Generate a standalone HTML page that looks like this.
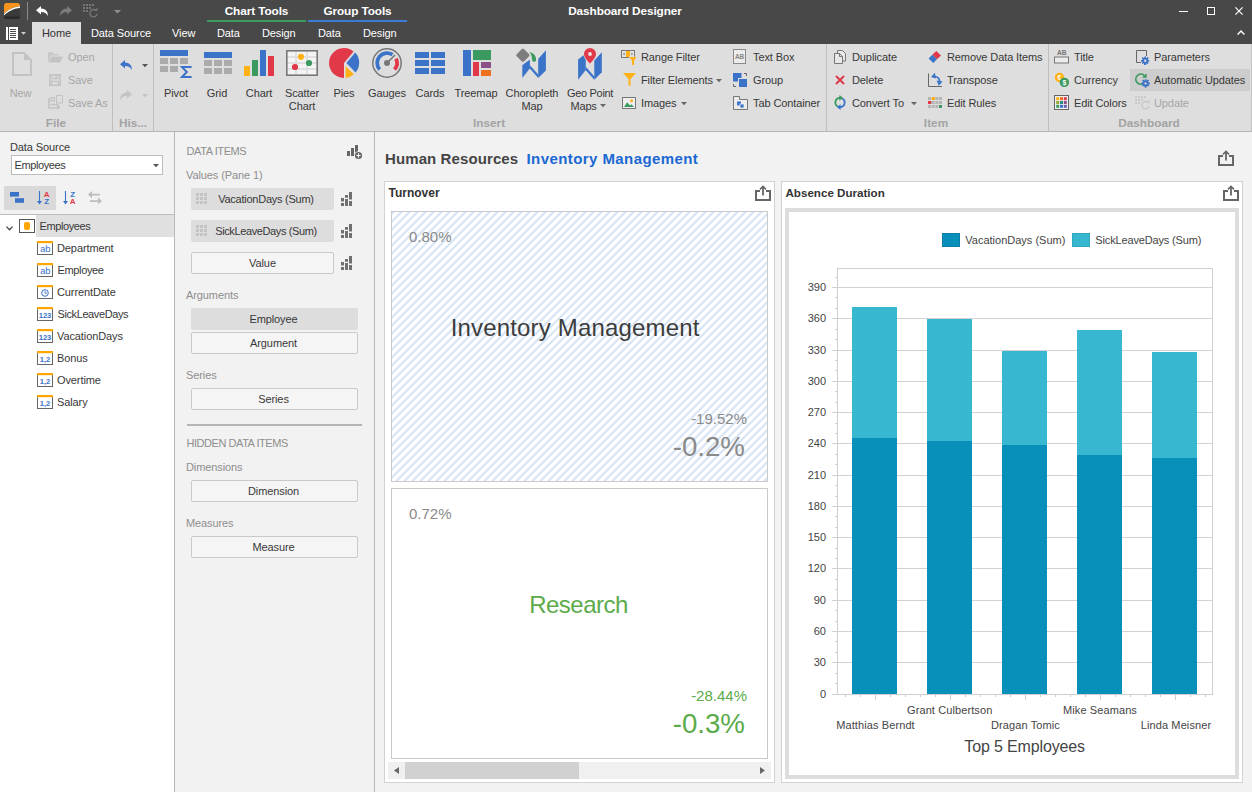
<!DOCTYPE html>
<html><head><meta charset="utf-8"><title>Dashboard Designer</title>
<style>
*{box-sizing:border-box;margin:0;padding:0}
html,body{width:1252px;height:792px;overflow:hidden;background:#f2f2f2}
body{position:relative;font:11px "Liberation Sans",sans-serif;color:#383838;letter-spacing:-0.1px}
.a{position:absolute}
.t{position:absolute;white-space:nowrap;line-height:14px;height:14px}
.c{text-align:center}
svg{position:absolute;overflow:visible}
#hdr{left:0;top:0;width:1252px;height:44px;background:#484848}
#rib{left:0;top:44px;width:1252px;height:88px;background:#dedede;border-bottom:1px solid #b6b6b6}
.w{color:#fff}
.b{font-weight:bold}
.dis{color:#a6a6a6}
.gc{color:#a3a3a3;font-weight:bold;font-size:11.8px;letter-spacing:0}
.sep{position:absolute;top:44px;width:1px;height:87px;background:#bebebe}
.btnf{position:absolute;height:22px;background:#dddddd;border-radius:2px;text-align:center;line-height:21px;color:#333}
.btno{position:absolute;height:22px;background:#f5f5f5;border:1px solid #c9c9c9;border-radius:2px;text-align:center;line-height:20px;color:#333}
.lbl{color:#8e8e8e}
</style></head><body>
<div class="a" id="hdr"></div>
<div class="a" id="rib"></div><div class="a" style="left:1251px;top:44px;width:1px;height:87px;background:#c4c4c4"></div>
<!--HEADER-->
<!-- logo -->
<svg class="a" style="left:4px;top:3px" width="16" height="16" viewBox="0 0 16 16">
<defs><clipPath id="lg"><rect x="0" y="0" width="16" height="16" rx="2.5"/></clipPath></defs>
<g clip-path="url(#lg)"><rect width="16" height="16" fill="#3a3a3a"/>
<path d="M0 0H16V3.2C9 4 3.5 7 0 11Z" fill="#f7941e"/>
<path d="M0 11C3.5 7 9 4 16 3.2V5C9.5 5.6 4 8.5 0 12.6Z" fill="#fff"/>
<rect x="0" y="13.5" width="16" height="2.5" fill="#2a2a2a"/></g>
</svg>
<div class="a" style="left:27px;top:2px;width:1px;height:18px;background:#8c8c8c"></div>
<!-- undo white -->
<svg style="left:36px;top:6px" width="12" height="10" viewBox="0 0 12 10"><path d="M0 4.2L5 0V2.6C9.5 2.6 11.8 5.5 12 10C10.4 7.2 8.5 6 5 6V8.5Z" fill="#fff"/></svg>
<!-- redo grey -->
<svg style="left:60px;top:6px" width="12" height="10" viewBox="0 0 12 10"><path d="M12 4.2L7 0V2.6C2.5 2.6 0.2 5.5 0 10C1.6 7.2 3.5 6 7 6V8.5Z" fill="#7d7d7d"/></svg>
<!-- update grey -->
<svg style="left:83px;top:4px" width="15" height="14" viewBox="0 0 15 14"><g fill="#777">
<rect x="0" y="0" width="2" height="2"/><rect x="3" y="0" width="2" height="2"/><rect x="6" y="0" width="2" height="2"/><rect x="9" y="0" width="2" height="2"/>
<rect x="0" y="3" width="2" height="2"/><rect x="3" y="3" width="2" height="2"/><rect x="6" y="3" width="2" height="2"/>
<rect x="0" y="6" width="2" height="2"/><rect x="3" y="6" width="2" height="2"/></g>
<path d="M13.2 6.6A3.7 3.7 0 1 0 14.2 9.8" fill="none" stroke="#777" stroke-width="1.3"/><path d="M11.2 6.8H14.6V3.4Z" fill="#777"/></svg>
<svg style="left:114px;top:10px" width="7" height="4" viewBox="0 0 7 4"><path d="M0 0H7L3.5 3.5Z" fill="#8f8f8f"/></svg>
<!-- context tabs -->
<div class="t w b" style="left:207px;top:4px;width:99px;text-align:center;font-size:11.8px">Chart Tools</div>
<div class="t w b" style="left:308px;top:4px;width:99px;text-align:center;font-size:11.8px">Group Tools</div>
<div class="a" style="left:207px;top:20px;width:99px;height:2px;background:#3a9d5d"></div>
<div class="a" style="left:308px;top:20px;width:99px;height:2px;background:#3b7bd4"></div>
<div class="t w b" style="left:525px;top:4px;width:200px;text-align:center;font-size:11.8px">Dashboard Designer</div>
<!-- window buttons -->
<div class="a" style="left:1179px;top:11px;width:9px;height:1px;background:#fff"></div>
<div class="a" style="left:1207px;top:7px;width:8px;height:8px;border:1px solid #fff"></div>
<svg style="left:1235px;top:7px" width="8" height="8" viewBox="0 0 8 8"><path d="M0.4 0.4L7.6 7.6M7.6 0.4L0.4 7.6" stroke="#fff" stroke-width="1.2"/></svg>
<svg style="left:1237px;top:30px" width="8" height="5" viewBox="0 0 8 5"><path d="M0.6 4.4L4 1L7.4 4.4" stroke="#fff" stroke-width="1.4" fill="none"/></svg>
<!-- app menu -->
<svg style="left:6px;top:27px" width="12" height="13" viewBox="0 0 12 13"><rect x="0.5" y="0.5" width="11" height="12" fill="#fff" stroke="#fff"/><rect x="0" y="0" width="2.2" height="13" fill="#484848" opacity="0"/><path d="M2.5 0V13" stroke="#484848" stroke-width="1"/><path d="M4 2.5H10M4 4.5H10M4 6.5H10M4 8.5H10M4 10.5H10" stroke="#484848" stroke-width="1"/></svg>
<svg style="left:21px;top:32px" width="5" height="3" viewBox="0 0 5 3"><path d="M0 0H5L2.5 2.7Z" fill="#d0d0d0"/></svg>
<!-- tabs -->
<div class="a" style="left:32px;top:22px;width:49px;height:22px;background:#dedede"></div>
<div class="t" style="left:32px;top:26px;width:49px;text-align:center;color:#333">Home</div>
<div class="t w" style="left:91px;top:26px">Data Source</div>
<div class="t w" style="left:172px;top:26px">View</div>
<div class="t w" style="left:217px;top:26px">Data</div>
<div class="t w" style="left:262px;top:26px">Design</div>
<div class="t w" style="left:318px;top:26px">Data</div>
<div class="t w" style="left:363px;top:26px">Design</div>
<!--/HEADER-->
<!--RIBBON-->
<div class="sep" style="left:112px"></div><div class="sep" style="left:153px"></div><div class="sep" style="left:826px"></div><div class="sep" style="left:1048px"></div>
<!-- File -->
<svg style="left:12px;top:52px" width="20" height="24" viewBox="0 0 20 24"><path d="M1 1H12L19 8V23H1Z" fill="none" stroke="#c3c3c3" stroke-width="2"/><path d="M12 1V8H19Z" fill="#c3c3c3"/></svg>
<div class="t c dis" style="left:0;top:86px;width:41px">New</div>
<svg style="left:48px;top:52px" width="15" height="11" viewBox="0 0 15 11"><path d="M0 10V0H4.5L6 2H11V3.5H3L0.8 10Z" fill="#c8c8c8"/><path d="M3.6 4.5H15L12 10.5H1Z" fill="#c3c3c3"/></svg>
<div class="t dis" style="left:68px;top:50px">Open</div>
<svg style="left:49px;top:74px" width="12" height="12" viewBox="0 0 12 12"><rect x="0.8" y="0.8" width="10.4" height="10.4" fill="none" stroke="#c3c3c3" stroke-width="1.6"/><path d="M3 1V4.6H9V1M2.6 11V7.4H9.4V11" fill="none" stroke="#c3c3c3" stroke-width="1.2"/><rect x="6.2" y="1.6" width="1.6" height="2.2" fill="#c3c3c3"/></svg>
<div class="t dis" style="left:68px;top:73px">Save</div>
<svg style="left:48px;top:95px" width="15" height="14" viewBox="0 0 15 14"><path d="M1 3V13H11V10" fill="none" stroke="#c3c3c3" stroke-width="1.6"/><rect x="3" y="2.6" width="3.4" height="3.4" fill="none" stroke="#c3c3c3" stroke-width="1.2"/><rect x="8.5" y="0.5" width="6" height="7.5" fill="none" stroke="#c3c3c3" stroke-width="1"/><path d="M2.5 9.5H9.5V13" fill="none" stroke="#c3c3c3" stroke-width="1.4"/></svg>
<div class="t dis" style="left:68px;top:96px">Save As</div>
<div class="t c gc" style="left:36px;top:116px;width:40px">File</div>
<!-- History -->
<svg style="left:120px;top:60px" width="12" height="10" viewBox="0 0 12 10"><path d="M0 4.2L5 0V2.6C9.5 2.6 11.8 5.5 12 10C10.4 7.2 8.5 6 5 6V8.5Z" fill="#3a73c8"/></svg>
<svg style="left:142px;top:64px" width="6" height="3.5" viewBox="0 0 6 3.5"><path d="M0 0H6L3 3.3Z" fill="#555"/></svg>
<svg style="left:120px;top:90px" width="12" height="10" viewBox="0 0 12 10"><path d="M12 4.2L7 0V2.6C2.5 2.6 0.2 5.5 0 10C1.6 7.2 3.5 6 7 6V8.5Z" fill="#c3c3c3"/></svg>
<svg style="left:142px;top:94px" width="6" height="3.5" viewBox="0 0 6 3.5"><path d="M0 0H6L3 3.3Z" fill="#c3c3c3"/></svg>
<div class="t c gc" style="left:113px;top:116px;width:40px">His...</div>
<!-- Pivot -->
<svg style="left:160px;top:48px" width="32" height="32" viewBox="0 0 32 32"><rect x="0" y="2" width="28" height="6" fill="#3a73c8"/><g fill="#ababab"><rect x="0" y="10" width="8" height="6"/><rect x="10" y="10" width="8" height="6"/><rect x="20" y="10" width="8" height="6"/><rect x="0" y="18" width="8" height="6"/><rect x="10" y="18" width="8" height="6"/></g><path d="M31.6 19H22L26.8 24L22 29H31.6" fill="none" stroke="#3a73c8" stroke-width="2" stroke-linejoin="miter"/></svg>
<div class="t c" style="left:146px;top:86px;width:60px">Pivot</div>
<!-- Grid -->
<svg style="left:204px;top:48px" width="28" height="32" viewBox="0 0 28 32"><rect x="0" y="4" width="28" height="6" fill="#3a73c8"/><g fill="#ababab"><rect x="0" y="12" width="8" height="6"/><rect x="10" y="12" width="8" height="6"/><rect x="20" y="12" width="8" height="6"/><rect x="0" y="20" width="8" height="6"/><rect x="10" y="20" width="8" height="6"/><rect x="20" y="20" width="8" height="6"/></g></svg>
<div class="t c" style="left:187px;top:86px;width:60px">Grid</div>
<!-- Chart -->
<svg style="left:244px;top:48px" width="30" height="32" viewBox="0 0 30 32"><rect x="0" y="18" width="6" height="10" fill="#ffb115"/><rect x="8" y="12" width="6" height="16" fill="#3a9a5f"/><rect x="16" y="2" width="6" height="26" fill="#3a73c8"/><rect x="24" y="8" width="6" height="20" fill="#e2394a"/></svg>
<div class="t c" style="left:229px;top:86px;width:60px">Chart</div>
<!-- Scatter -->
<svg style="left:286px;top:48px" width="32" height="32" viewBox="0 0 32 32"><rect x="0.5" y="2.5" width="31" height="25" fill="#f4f4f4" stroke="#777" stroke-width="1"/><path d="M1 9H31M1 15H31M1 21H31M10 3V27M21 3V27" stroke="#d9d9d9" stroke-width="1.4" fill="none"/><rect x="0.8" y="2.8" width="30.4" height="24.4" fill="none" stroke="#777" stroke-width="1.6"/><circle cx="15" cy="8.8" r="3.1" fill="#ffb115"/><circle cx="23" cy="15" r="3.1" fill="#3a9a5f"/><circle cx="9" cy="19" r="3.1" fill="#e2394a"/></svg>
<div class="t c" style="left:272px;top:86.5px;width:60px;height:28px;line-height:13px">Scatter<br>Chart</div>
<!-- Pies -->
<svg style="left:329px;top:48px" width="32" height="32" viewBox="0 0 32 32"><path d="M15 15L24.6 3.5A15 15 0 1 0 15 30Z" fill="#e2394a"/><path d="M17.4 15L26.2 4.6A15 15 0 0 1 26.6 24.5Z" fill="#3a73c8"/><path d="M16.6 18.2L24.9 26.2A15 15 0 0 1 16.6 30Z" fill="#ffb115"/></svg>
<div class="t c" style="left:314px;top:86px;width:60px">Pies</div>
<!-- Gauges -->
<svg style="left:371px;top:48px" width="32" height="32" viewBox="0 0 32 32"><circle cx="16" cy="15" r="14.2" fill="none" stroke="#777" stroke-width="1.5"/><path d="M8.6 21.6A10 10 0 0 1 21.5 6.6" fill="none" stroke="#3a73c8" stroke-width="3.8"/><path d="M25 10.6A10 10 0 0 1 23.5 21.6" fill="none" stroke="#e2394a" stroke-width="3.8"/><path d="M16 15L24 7" stroke="#777" stroke-width="1.6"/><circle cx="16" cy="15" r="3" fill="#777"/></svg>
<div class="t c" style="left:357px;top:86px;width:60px">Gauges</div>
<!-- Cards -->
<svg style="left:415px;top:48px" width="30" height="32" viewBox="0 0 30 32"><g fill="#3a73c8"><rect x="0" y="4" width="14" height="6"/><rect x="16" y="4" width="14" height="6"/><rect x="0" y="12" width="14" height="6"/><rect x="16" y="12" width="14" height="6"/><rect x="0" y="20" width="14" height="6"/><rect x="16" y="20" width="14" height="6"/></g></svg>
<div class="t c" style="left:400px;top:86px;width:60px">Cards</div>
<!-- Treemap -->
<svg style="left:463px;top:48px" width="28" height="32" viewBox="0 0 28 32"><rect x="0" y="2" width="8" height="26" fill="#3a73c8"/><rect x="10" y="2" width="18" height="10" fill="#3a9a5f"/><rect x="10" y="14" width="6" height="14" fill="#e2394a"/><rect x="18" y="14" width="10" height="6" fill="#8c5089"/><rect x="18" y="22" width="10" height="6" fill="#f07020"/></svg>
<div class="t c" style="left:446px;top:86px;width:60px">Treemap</div>
<!-- Choropleth -->
<svg style="left:516px;top:48px" width="32" height="32" viewBox="0 0 32 32"><g fill="#3a73c8"><path d="M6.3 17.2L13.9 11.4V20.3L6.3 29.9Z"/><path d="M13.9 17.2L22.2 26.6V29.9L13.9 20.5Z"/><path d="M22.2 11L29.9 2.2V22.6L22.2 29.9Z"/></g><rect x="1.2" y="1.5" width="11.4" height="11.4" rx="2" transform="rotate(45 6.9 7.2)" fill="#7d7d7d" stroke="#dedede" stroke-width="1.2"/><path d="M13.1 3.9C18 4.5 20.6 8.6 20 12.2C19.6 14.4 16.6 14.4 16.2 12.2C15.8 9.5 15.8 6 13.1 3.9Z" fill="#3a9a5f"/></svg>
<div class="t c" style="left:492px;top:86.5px;width:80px;height:28px;line-height:13px">Choropleth<br>Map</div>
<!-- Geo Point -->
<svg style="left:574px;top:48px" width="32" height="32" viewBox="0 0 32 32"><g fill="#3a73c8"><path d="M4.1 11.4L11.75 5.6V21.9L4.1 31.7Z"/><path d="M11.75 18.8L20.3 28.4V31.7L11.75 22.2Z"/><path d="M20.3 12.6L27.8 4.3V24.2L20.3 31.7Z"/></g><path d="M16 0A6 6 0 0 1 22 6C22 9.6 18.4 12.6 16 15.8C13.6 12.6 10 9.6 10 6A6 6 0 0 1 16 0Z" fill="#e2394a" stroke="#dedede" stroke-width="1.4"/><path d="M16 0A6 6 0 0 1 22 6C22 9.6 18.4 12.6 16 15.8C13.6 12.6 10 9.6 10 6A6 6 0 0 1 16 0Z" fill="#e2394a"/><circle cx="16" cy="6" r="1.9" fill="#e8e8e8"/></svg>
<div class="t c" style="left:550px;top:86.5px;width:80px;height:13px;line-height:13px;letter-spacing:-0.3px">Geo Point</div><div class="t" style="left:570.5px;top:99.5px;height:13px;line-height:13px;letter-spacing:-0.2px">Maps</div>
<svg style="left:600px;top:104px" width="6" height="3.5" viewBox="0 0 6 3.5"><path d="M0 0H6L3 3.3Z" fill="#666"/></svg>
<div class="t c gc" style="left:459px;top:116px;width:60px">Insert</div>
<!-- small insert col1 -->
<svg style="left:621px;top:50px" width="16" height="15" viewBox="0 0 16 15"><rect x="0.5" y="0.5" width="13" height="7" fill="#e4e4e4" stroke="#777"/><rect x="5" y="1" width="4" height="6" fill="#ffb115"/><path d="M3.6 2.6V5.4L2 4Z M10.4 2.6V5.4L12 4Z" fill="#777"/><path d="M8 7H16L13 10.4V15H11V10.4Z" fill="#ffb115" stroke="#dedede" stroke-width="0.8"/><path d="M8.4 7.3H15.6L13 10.4V15H11V10.4Z" fill="#ffb115"/></svg>
<div class="t" style="left:641px;top:50px">Range Filter</div>
<svg style="left:622.6px;top:73px" width="13" height="14" viewBox="0 0 13 14"><path d="M0 0H13L7.5 6V13.5L5.5 12V6Z" fill="#ffb115"/></svg>
<div class="t" style="left:641px;top:73px">Filter Elements</div>
<svg style="left:716px;top:79px" width="6" height="3.5" viewBox="0 0 6 3.5"><path d="M0 0H6L3 3.3Z" fill="#666"/></svg>
<svg style="left:622px;top:97px" width="14" height="12" viewBox="0 0 14 12"><rect x="0.5" y="0.5" width="13" height="11" fill="#efefef" stroke="#777"/><path d="M2 10L5.2 5.2L8 8.5L9.5 7.2L12 10Z" fill="#3a9a5f"/><circle cx="9.6" cy="3.8" r="1.5" fill="#ffb115"/></svg>
<div class="t" style="left:641px;top:96px">Images</div>
<svg style="left:681px;top:102px" width="6" height="3.5" viewBox="0 0 6 3.5"><path d="M0 0H6L3 3.3Z" fill="#666"/></svg>
<!-- small insert col2 -->
<svg style="left:733px;top:49px" width="13" height="15" viewBox="0 0 13 15"><rect x="0.5" y="0.5" width="12" height="14" fill="#ececec" stroke="#8a8a8a"/><text x="6.5" y="10" font-family="Liberation Sans,sans-serif" font-size="6.5" font-weight="bold" fill="#888" text-anchor="middle">AB</text></svg>
<div class="t" style="left:753px;top:50px">Text Box</div>
<svg style="left:733px;top:73px" width="14" height="14" viewBox="0 0 14 14"><rect x="0" y="0" width="8.5" height="8.5" fill="#3a73c8"/><rect x="5.5" y="5.5" width="8.5" height="8.5" fill="#3a73c8" stroke="#dedede" stroke-width="1"/><rect x="6" y="6" width="8" height="8" fill="#3a73c8"/><path d="M11 0.5H13.5V3M0.5 11V13.5H3" fill="none" stroke="#666" stroke-width="1"/></svg>
<div class="t" style="left:753px;top:73px">Group</div>
<svg style="left:733px;top:96px" width="15" height="14" viewBox="0 0 15 14"><path d="M0.5 0.5H6.5V3.5H14.5V13.5H0.5Z" fill="#ececec" stroke="#777"/><rect x="4" y="5.5" width="4" height="4" fill="#3a73c8"/><rect x="7" y="8" width="4" height="4" fill="#3a73c8" stroke="#ececec" stroke-width="0.8"/></svg>
<div class="t" style="left:753px;top:96px">Tab Container</div>
<!-- Item col1 -->
<svg style="left:834px;top:50px" width="12" height="14" viewBox="0 0 12 14"><path d="M3.5 3V0.5H8.5L11.5 3.5V11H8" fill="#e8e8e8" stroke="#777"/><path d="M0.5 3.5H5.5L8.5 6.5V13.5H0.5Z" fill="#e8e8e8" stroke="#777"/><path d="M5.5 3.5V6.5H8.5" fill="none" stroke="#777"/></svg>
<div class="t" style="left:852px;top:50px">Duplicate</div>
<svg style="left:835px;top:75px" width="10" height="10" viewBox="0 0 10 10"><path d="M1 1L9 9M9 1L1 9" stroke="#e2394a" stroke-width="2"/></svg>
<div class="t" style="left:852px;top:73px">Delete</div>
<svg style="left:834px;top:95px" width="12" height="15" viewBox="0 0 12 15"><path d="M3.7 11.5A4.6 4.6 0 0 1 6 2.9" fill="none" stroke="#3a9a5f" stroke-width="1.8"/><path d="M5.4 0L9.2 2.9L5.4 5.8Z" fill="#3a9a5f"/><path d="M8.3 3.5A4.6 4.6 0 0 1 6 12.1" fill="none" stroke="#3a73c8" stroke-width="1.8"/><path d="M6.6 9.2L2.8 12.1L6.6 15Z" fill="#3a73c8"/></svg>
<div class="t" style="left:852px;top:96px">Convert To</div>
<svg style="left:911px;top:102px" width="6" height="3.5" viewBox="0 0 6 3.5"><path d="M0 0H6L3 3.3Z" fill="#666"/></svg>
<!-- Item col2 -->
<svg style="left:928px;top:50px" width="14" height="14" viewBox="0 0 14 14"><path d="M8.3 1L13 5.5L9 9.3L4.3 4.8Z" fill="#e2394a"/><path d="M4.3 4.8L9 9.3L5.3 13L0.6 8.4Z" fill="#3a73c8"/></svg>
<div class="t" style="left:947px;top:50px">Remove Data Items</div>
<svg style="left:928px;top:72px" width="15" height="15" viewBox="0 0 15 15"><path d="M0.5 1.5V14.5H14" fill="none" stroke="#666"/><path d="M5.5 4.5C9.5 4 12 6.5 11.5 10.5" fill="none" stroke="#3a73c8" stroke-width="1.6"/><path d="M3 5L6.8 0.8L8 6.4Z" fill="#3a73c8"/><path d="M8.6 8.6L14.6 9.6L10.8 13.8Z" fill="#3a73c8"/></svg>
<div class="t" style="left:947px;top:73px">Transpose</div>
<svg style="left:928px;top:97px" width="14" height="11" viewBox="0 0 14 11"><g fill="#b5b5b5"><rect x="0" y="0" width="3" height="3"/><rect x="7.4" y="0" width="3" height="3"/><rect x="11" y="0" width="3" height="3"/><rect x="3.7" y="4" width="3" height="3"/><rect x="7.4" y="4" width="3" height="3"/><rect x="11" y="4" width="3" height="3"/><rect x="0" y="8" width="3" height="3"/><rect x="3.7" y="8" width="3" height="3"/><rect x="7.4" y="8" width="3" height="3"/></g><rect x="3.7" y="0" width="3.3" height="3" fill="#ffb115"/><rect x="0" y="4" width="3.3" height="3" fill="#e2394a"/><rect x="11" y="8" width="3" height="3" fill="#3a9a5f"/></svg>
<div class="t" style="left:947px;top:96px">Edit Rules</div>
<div class="t c gc" style="left:906px;top:116px;width:60px">Item</div>
<!-- Dashboard col1 -->
<svg style="left:1054px;top:49px" width="15" height="15" viewBox="0 0 15 15"><text x="7.7" y="6" font-family="Liberation Sans,sans-serif" font-size="6.6" font-weight="bold" fill="#777" text-anchor="middle">AB</text><rect x="0.5" y="8" width="14" height="6" fill="#ececec" stroke="#777"/></svg>
<div class="t" style="left:1074px;top:50px">Title</div>
<svg style="left:1054px;top:72px" width="16" height="16" viewBox="0 0 16 16"><circle cx="5.5" cy="5.5" r="4.7" fill="#ffb115"/><text x="5.5" y="8" font-family="Liberation Sans,sans-serif" font-size="7" font-weight="bold" fill="#fff" text-anchor="middle">€</text><circle cx="10.4" cy="10.4" r="4.7" fill="#3a9a5f"/><text x="10.4" y="13" font-family="Liberation Sans,sans-serif" font-size="7" font-weight="bold" fill="#fff" text-anchor="middle">$</text></svg>
<div class="t" style="left:1074px;top:73px">Currency</div>
<svg style="left:1054px;top:95px" width="15" height="15" viewBox="0 0 15 15"><rect x="0.5" y="0.5" width="14" height="14" fill="#f0f0f0" stroke="#666"/><rect x="2.2" y="2.2" width="3" height="3" fill="#ffb115"/><rect x="6" y="2.2" width="3" height="3" fill="#f07020"/><rect x="9.8" y="2.2" width="3" height="3" fill="#e2394a"/><rect x="2.2" y="6" width="3" height="3" fill="#9aa83a"/><rect x="6" y="6" width="3" height="3" fill="#2a8a8a"/><rect x="9.8" y="6" width="3" height="3" fill="#8c5089"/><rect x="2.2" y="9.8" width="3" height="3" fill="#3a9a5f"/><rect x="6" y="9.8" width="3" height="3" fill="#3a73c8"/><rect x="9.8" y="9.8" width="3" height="3" fill="#6a5ab0"/></svg>
<div class="t" style="left:1074px;top:96px">Edit Colors</div>
<!-- Dashboard col2 -->
<div class="a" style="left:1130px;top:69px;width:120px;height:22px;background:#cdcdcd"></div>
<svg style="left:1136px;top:50px" width="14" height="15" viewBox="0 0 14 15"><path d="M5 12.5H0.5V0.5H10.5V6" fill="none" stroke="#666"/><g fill="#3a73c8"><circle cx="9.2" cy="10.8" r="3"/><path d="M8.4 6.6H10L10.3 15H8.1Z M5 10H13.4V11.6H5Z M5.7 8L6.8 6.9L12.8 12.9L11.6 14Z M11.6 6.9L12.8 8L6.8 14L5.7 12.9Z"/></g><circle cx="9.2" cy="10.8" r="1.2" fill="#dedede"/></svg>
<div class="t" style="left:1154px;top:50px">Parameters</div>
<svg style="left:1134px;top:72px" width="16" height="16" viewBox="0 0 16 16"><path d="M9.6 11.3A5 5 0 1 1 10.4 3.6" fill="none" stroke="#3a9a5f" stroke-width="1.7"/><path d="M8 5.8H12.6V1.2Z" fill="#3a9a5f"/><g fill="#3a73c8"><circle cx="11.6" cy="11.4" r="3"/><path d="M10.8 7.2H12.4L12.7 15.6H10.5Z M7.4 10.6H15.8V12.2H7.4Z M8.1 8.6L9.2 7.5L15.2 13.5L14 14.6Z M14 7.5L15.2 8.6L9.2 14.6L8.1 13.5Z"/></g><circle cx="11.6" cy="11.4" r="1.2" fill="#cdcdcd"/></svg>
<div class="t" style="left:1154px;top:73px">Automatic Updates</div>
<svg style="left:1135px;top:96px" width="15" height="14" viewBox="0 0 15 14"><g fill="#c9c9c9">
<rect x="0" y="0" width="2" height="2"/><rect x="3" y="0" width="2" height="2"/><rect x="6" y="0" width="2" height="2"/><rect x="9" y="0" width="2" height="2"/>
<rect x="0" y="3" width="2" height="2"/><rect x="3" y="3" width="2" height="2"/><rect x="6" y="3" width="2" height="2"/>
<rect x="0" y="6" width="2" height="2"/><rect x="3" y="6" width="2" height="2"/></g>
<path d="M13.2 6.6A3.7 3.7 0 1 0 14.2 9.8" fill="none" stroke="#c9c9c9" stroke-width="1.3"/><path d="M11.2 6.8H14.6V3.4Z" fill="#c9c9c9"/></svg>
<div class="t dis" style="left:1154px;top:96px">Update</div>
<div class="t c gc" style="left:1109px;top:116px;width:80px">Dashboard</div>
<!--/RIBBON-->
<!--LEFT-->
<div class="a" style="left:0;top:132px;width:174px;height:660px;background:#f2f2f2"></div>
<div class="a" style="left:174px;top:132px;width:1px;height:660px;background:#b8b8b8"></div>
<div class="t" style="left:10px;top:140px">Data Source</div>
<div class="a" style="left:11px;top:155px;width:152px;height:20px;background:#fff;border:1px solid #bdbdbd"></div>
<div class="t" style="left:14.5px;top:158px;letter-spacing:-0.4px">Employees</div>
<svg style="left:153px;top:164px" width="6" height="3.5" viewBox="0 0 6 3.5"><path d="M0 0H6L3 3.3Z" fill="#555"/></svg>
<div class="a" style="left:4px;top:186px;width:52px;height:24px;background:#d9d9d9"></div>
<svg style="left:10px;top:192px" width="14" height="11" viewBox="0 0 14 11"><rect x="0" y="0" width="9" height="4.6" fill="#3a73c8"/><rect x="5" y="6.2" width="9" height="4.6" fill="#3a73c8"/></svg>
<svg style="left:36px;top:190px" width="14" height="15" viewBox="0 0 14 15"><path d="M3.5 1V13" stroke="#3a73c8" stroke-width="1.1"/><path d="M1 11H6L3.5 14.4Z" fill="#3a73c8"/><text x="10.6" y="6.6" font-family="Liberation Sans,sans-serif" font-size="8" font-weight="bold" fill="#e2394a" text-anchor="middle">A</text><text x="10.6" y="14" font-family="Liberation Sans,sans-serif" font-size="8" font-weight="bold" fill="#3a73c8" text-anchor="middle">Z</text></svg>
<svg style="left:62px;top:190px" width="14" height="15" viewBox="0 0 14 15"><path d="M3.5 1V13" stroke="#3a73c8" stroke-width="1.1"/><path d="M1 11H6L3.5 14.4Z" fill="#3a73c8"/><text x="10.6" y="6.6" font-family="Liberation Sans,sans-serif" font-size="8" font-weight="bold" fill="#3a73c8" text-anchor="middle">Z</text><text x="10.6" y="14" font-family="Liberation Sans,sans-serif" font-size="8" font-weight="bold" fill="#e2394a" text-anchor="middle">A</text></svg>
<svg style="left:88px;top:191px" width="14" height="14" viewBox="0 0 14 14"><g fill="#bdbdbd"><path d="M0 3.6L4 0V2.8H12V4.6H4V7.2Z"/><path d="M14 10L10 6.4V9.2H2V11H10V13.6Z"/></g></svg>
<div class="a" style="left:0;top:214px;width:174px;height:1px;background:#bcbcbc"></div>
<div class="a" style="left:0;top:215px;width:174px;height:577px;background:#fff"></div>
<div class="a" style="left:36px;top:215px;width:138px;height:22px;background:#e0e0e0"></div>
<svg style="left:5.5px;top:226px" width="7" height="5" viewBox="0 0 7 5"><path d="M0.4 0.6L3.5 3.8L6.6 0.6" fill="none" stroke="#444" stroke-width="1.3"/></svg>
<svg style="left:19px;top:219px" width="16" height="14" viewBox="0 0 16 14"><rect x="0.5" y="0.5" width="15" height="13" fill="#fff" stroke="#555"/><rect x="5" y="3" width="6" height="8" rx="2" fill="#ffa500"/></svg>
<div class="t" style="left:39.5px;top:219px;letter-spacing:-0.4px">Employees</div>
<svg style="left:37px;top:241px" width="16" height="14" viewBox="0 0 16 14"><rect x="0.5" y="1.5" width="15" height="12" fill="#fff" stroke="#666"/><rect x="0" y="0" width="16" height="2.2" fill="#ffa500"/><text x="8" y="11" font-family="Liberation Mono,monospace" font-size="9.5" fill="#3a73c8" text-anchor="middle" letter-spacing="-0.6">ab</text></svg>
<div class="t" style="left:57px;top:241px">Department</div>
<svg style="left:37px;top:263px" width="16" height="14" viewBox="0 0 16 14"><rect x="0.5" y="1.5" width="15" height="12" fill="#fff" stroke="#666"/><rect x="0" y="0" width="16" height="2.2" fill="#ffa500"/><text x="8" y="11" font-family="Liberation Mono,monospace" font-size="9.5" fill="#3a73c8" text-anchor="middle" letter-spacing="-0.6">ab</text></svg>
<div class="t" style="left:57.5px;top:263px;letter-spacing:-0.35px">Employee</div>
<svg style="left:37px;top:285px" width="16" height="14" viewBox="0 0 16 14"><rect x="0.5" y="1.5" width="15" height="12" fill="#fff" stroke="#666"/><rect x="0" y="0" width="16" height="2.2" fill="#ffa500"/><circle cx="8" cy="8" r="3.3" fill="none" stroke="#3a73c8" stroke-width="1"/><path d="M8 6V8.2H9.8" fill="none" stroke="#3a73c8" stroke-width="0.9"/></svg>
<div class="t" style="left:57px;top:285px">CurrentDate</div>
<svg style="left:37px;top:307px" width="16" height="14" viewBox="0 0 16 14"><rect x="0.5" y="1.5" width="15" height="12" fill="#fff" stroke="#666"/><rect x="0" y="0" width="16" height="2.2" fill="#ffa500"/><text x="8" y="10.8" font-family="Liberation Sans,sans-serif" font-size="7.6" font-weight="bold" fill="#3a73c8" text-anchor="middle" letter-spacing="-0.1">123</text></svg>
<div class="t" style="left:57.5px;top:307px;letter-spacing:-0.4px">SickLeaveDays</div>
<svg style="left:37px;top:329px" width="16" height="14" viewBox="0 0 16 14"><rect x="0.5" y="1.5" width="15" height="12" fill="#fff" stroke="#666"/><rect x="0" y="0" width="16" height="2.2" fill="#ffa500"/><text x="8" y="10.8" font-family="Liberation Sans,sans-serif" font-size="7.6" font-weight="bold" fill="#3a73c8" text-anchor="middle" letter-spacing="-0.1">123</text></svg>
<div class="t" style="left:57px;top:329px">VacationDays</div>
<svg style="left:37px;top:351px" width="16" height="14" viewBox="0 0 16 14"><rect x="0.5" y="1.5" width="15" height="12" fill="#fff" stroke="#666"/><rect x="0" y="0" width="16" height="2.2" fill="#ffa500"/><text x="8" y="10.8" font-family="Liberation Sans,sans-serif" font-size="7.6" font-weight="bold" fill="#3a73c8" text-anchor="middle">1,2</text></svg>
<div class="t" style="left:57px;top:351px">Bonus</div>
<svg style="left:37px;top:373px" width="16" height="14" viewBox="0 0 16 14"><rect x="0.5" y="1.5" width="15" height="12" fill="#fff" stroke="#666"/><rect x="0" y="0" width="16" height="2.2" fill="#ffa500"/><text x="8" y="10.8" font-family="Liberation Sans,sans-serif" font-size="7.6" font-weight="bold" fill="#3a73c8" text-anchor="middle">1,2</text></svg>
<div class="t" style="left:57px;top:373px">Overtime</div>
<svg style="left:37px;top:395px" width="16" height="14" viewBox="0 0 16 14"><rect x="0.5" y="1.5" width="15" height="12" fill="#fff" stroke="#666"/><rect x="0" y="0" width="16" height="2.2" fill="#ffa500"/><text x="8" y="10.8" font-family="Liberation Sans,sans-serif" font-size="7.6" font-weight="bold" fill="#3a73c8" text-anchor="middle">1,2</text></svg>
<div class="t" style="left:57px;top:395px">Salary</div>
<!--/LEFT-->
<!--ITEMS-->
<div class="a" style="left:175px;top:132px;width:199px;height:660px;background:#f2f2f2"></div>
<div class="a" style="left:374px;top:132px;width:1px;height:660px;background:#b8b8b8"></div>
<div class="t lbl" style="left:186.5px;top:144px;letter-spacing:-0.4px">DATA ITEMS</div>
<svg style="left:347px;top:145px" width="16" height="15" viewBox="0 0 16 15"><g fill="#666"><rect x="0" y="6" width="3" height="5"/><rect x="4" y="3" width="3" height="8"/><rect x="8" y="0" width="3" height="8"/></g><circle cx="11.5" cy="10.5" r="4.3" fill="#f2f2f2"/><circle cx="11.5" cy="10.5" r="3.6" fill="#666"/><path d="M9.3 10.5H13.7M11.5 8.3V12.7" stroke="#f2f2f2" stroke-width="1.1"/></svg>
<div class="t lbl" style="left:186px;top:168px">Values (Pane 1)</div>
<div class="btnf" style="left:191px;top:188px;width:143px"></div>
<div class="t c" style="left:198px;top:192px;width:136px;letter-spacing:-0.25px">VacationDays (Sum)</div>
<div class="btnf" style="left:191px;top:220px;width:143px"></div>
<div class="t c" style="left:198px;top:224px;width:136px;letter-spacing:-0.38px">SickLeaveDays (Sum)</div>
<div class="btno" style="left:191px;top:252px;width:143px"></div>
<div class="t c" style="left:191px;top:256px;width:143px">Value</div>
<div class="t lbl" style="left:186px;top:288px">Arguments</div>
<div class="btnf" style="left:191px;top:308px;width:167px"></div>
<div class="t c" style="left:191px;top:312px;width:165px">Employee</div>
<div class="btno" style="left:191px;top:332px;width:167px"></div>
<div class="t c" style="left:191px;top:336px;width:165px">Argument</div>
<div class="t lbl" style="left:186px;top:368px">Series</div>
<div class="btno" style="left:191px;top:388px;width:167px"></div>
<div class="t c" style="left:191px;top:392px;width:165px">Series</div>
<div class="a" style="left:187px;top:424px;width:175px;height:2px;background:#b5b5b5"></div>
<div class="t lbl" style="left:186.5px;top:436px;letter-spacing:-0.45px">HIDDEN DATA ITEMS</div>
<div class="t lbl" style="left:186px;top:460px">Dimensions</div>
<div class="btno" style="left:191px;top:480px;width:167px"></div>
<div class="t c" style="left:191px;top:484px;width:165px">Dimension</div>
<div class="t lbl" style="left:186px;top:516px">Measures</div>
<div class="btno" style="left:191px;top:536px;width:167px"></div>
<div class="t c" style="left:191px;top:540px;width:165px">Measure</div>
<svg style="left:196px;top:193px" width="11" height="11" viewBox="0 0 11 11"><g fill="#c4c4c4"><rect x="0" y="0" width="3" height="3"/><rect x="0" y="4" width="3" height="3"/><rect x="0" y="8" width="3" height="3"/><rect x="4" y="0" width="3" height="3"/><rect x="4" y="4" width="3" height="3"/><rect x="4" y="8" width="3" height="3"/><rect x="8" y="0" width="3" height="3"/><rect x="8" y="4" width="3" height="3"/><rect x="8" y="8" width="3" height="3"/></g></svg>
<svg style="left:196px;top:225px" width="11" height="11" viewBox="0 0 11 11"><g fill="#c4c4c4"><rect x="0" y="0" width="3" height="3"/><rect x="0" y="4" width="3" height="3"/><rect x="0" y="8" width="3" height="3"/><rect x="4" y="0" width="3" height="3"/><rect x="4" y="4" width="3" height="3"/><rect x="4" y="8" width="3" height="3"/><rect x="8" y="0" width="3" height="3"/><rect x="8" y="4" width="3" height="3"/><rect x="8" y="8" width="3" height="3"/></g></svg>
<svg style="left:341px;top:192px" width="11" height="14" viewBox="0 0 11 14"><g fill="#707070"><rect x="0" y="6" width="3" height="3.5"/><rect x="0" y="11" width="3" height="3"/><rect x="4" y="3" width="3" height="2.8"/><rect x="4" y="7" width="3" height="7"/><rect x="8" y="0" width="3" height="7.5"/><rect x="8" y="9" width="3" height="5"/></g></svg>
<svg style="left:341px;top:224px" width="11" height="14" viewBox="0 0 11 14"><g fill="#707070"><rect x="0" y="6" width="3" height="3.5"/><rect x="0" y="11" width="3" height="3"/><rect x="4" y="3" width="3" height="2.8"/><rect x="4" y="7" width="3" height="7"/><rect x="8" y="0" width="3" height="7.5"/><rect x="8" y="9" width="3" height="5"/></g></svg>
<svg style="left:341px;top:256px" width="11" height="14" viewBox="0 0 11 14"><g fill="#707070"><rect x="0" y="6" width="3" height="3.5"/><rect x="0" y="11" width="3" height="3"/><rect x="4" y="3" width="3" height="2.8"/><rect x="4" y="7" width="3" height="7"/><rect x="8" y="0" width="3" height="7.5"/><rect x="8" y="9" width="3" height="5"/></g></svg>
<!--/ITEMS-->
<!--DASH-->
<div class="a" style="left:375px;top:132px;width:877px;height:660px;background:#f2f2f2"></div>
<div class="t b" style="left:385px;top:150px;font-size:15px;line-height:18px;height:18px;color:#454545;letter-spacing:0.1px">Human Resources</div>
<div class="t b" style="left:526.5px;top:150px;font-size:15px;line-height:18px;height:18px;color:#1b68d3;letter-spacing:0.42px">Inventory Management</div>
<svg style="left:1218px;top:150px" width="16" height="16" viewBox="0 0 16 16"><path d="M5 6H1V15H15V6H11" fill="none" stroke="#666" stroke-width="2"/><path d="M8 2V10.6" stroke="#666" stroke-width="1.8"/><path d="M5 4.4L8 1.4L11 4.4" fill="none" stroke="#666" stroke-width="1.5"/></svg>
<div class="a" style="left:384px;top:181px;width:391px;height:602px;background:#fff;border:1px solid #d2d2d2"></div>
<div class="t b" style="left:388.5px;top:186px;font-size:12px;color:#333;letter-spacing:0">Turnover</div>
<svg style="left:755px;top:185px" width="16" height="16" viewBox="0 0 16 16"><path d="M5 6H1V15H15V6H11" fill="none" stroke="#666" stroke-width="2"/><path d="M8 2V10.6" stroke="#666" stroke-width="1.8"/><path d="M5 4.4L8 1.4L11 4.4" fill="none" stroke="#666" stroke-width="1.5"/></svg>
<svg style="left:391px;top:211px" width="377" height="271" viewBox="0 0 377 271"><defs><pattern id="hat" width="8" height="8" patternUnits="userSpaceOnUse" x="1" y="1"><rect width="8" height="8" fill="#fff"/><path d="M-6.5 8L8 -6.5M-2.5 12L12 -2.5M-10.5 4L4 -10.5" stroke="#d7e4f5" stroke-width="2.1"/></pattern></defs><rect x="0.5" y="0.5" width="376" height="270" fill="url(#hat)" stroke="#c9c9c9"/></svg>
<div class="t" style="left:409px;top:227.5px;font-size:15px;line-height:18px;height:18px;color:#8a8a8a;letter-spacing:0">0.80%</div>
<div class="t" style="left:450.7px;top:313.5px;font-size:24px;line-height:28px;height:28px;color:#3d3d3d;letter-spacing:0.17px">Inventory Management</div>
<div class="t" style="left:547px;top:410px;width:200px;text-align:right;font-size:15px;line-height:18px;height:18px;color:#8a8a8a;letter-spacing:0">-19.52%</div>
<div class="t" style="left:545px;top:431px;width:200px;text-align:right;font-size:27.7px;line-height:32px;height:32px;color:#8a8a8a;letter-spacing:0">-0.2%</div>
<div class="a" style="left:391px;top:488px;width:377px;height:271px;background:#fff;border:1px solid #c9c9c9"></div>
<div class="t" style="left:409px;top:504.5px;font-size:15px;line-height:18px;height:18px;color:#8a8a8a;letter-spacing:0">0.72%</div>
<div class="t c" style="left:391px;top:590.5px;width:375px;font-size:24px;line-height:28px;height:28px;color:#5bab4b;letter-spacing:-0.5px">Research</div>
<div class="t" style="left:547px;top:687px;width:200px;text-align:right;font-size:15px;line-height:18px;height:18px;color:#5bab4b;letter-spacing:0">-28.44%</div>
<div class="t" style="left:545px;top:708px;width:200px;text-align:right;font-size:27.7px;line-height:32px;height:32px;color:#5bab4b;letter-spacing:0">-0.3%</div>
<div class="a" style="left:388px;top:762px;width:383px;height:17px;background:#f0f0f0"></div>
<div class="a" style="left:405px;top:762px;width:174px;height:17px;background:#d1d1d1"></div>
<svg style="left:394px;top:767px" width="5" height="7" viewBox="0 0 5 7"><path d="M5 0V7L0 3.5Z" fill="#666"/></svg>
<svg style="left:760px;top:767px" width="5" height="7" viewBox="0 0 5 7"><path d="M0 0V7L5 3.5Z" fill="#666"/></svg>
<div class="a" style="left:781px;top:181px;width:462px;height:602px;background:#fff;border:1px solid #d2d2d2"></div>
<div class="t b" style="left:785.5px;top:186px;font-size:11.6px;color:#333;letter-spacing:0">Absence Duration</div>
<svg style="left:1223px;top:185px" width="16" height="16" viewBox="0 0 16 16"><path d="M5 6H1V15H15V6H11" fill="none" stroke="#666" stroke-width="2"/><path d="M8 2V10.6" stroke="#666" stroke-width="1.8"/><path d="M5 4.4L8 1.4L11 4.4" fill="none" stroke="#666" stroke-width="1.5"/></svg>
<div class="a" style="left:785px;top:208px;width:454px;height:571px;background:#fff;border:4px solid #dddddd"></div>
<svg style="left:789px;top:212px" width="446" height="563" viewBox="789 212 446 563" font-family="Liberation Sans,sans-serif" font-size="11" fill="#444" letter-spacing="0">
<rect x="837.5" y="268.5" width="375" height="426" fill="#fff" stroke="#cfcfcf"/>
<path d="M832 694.5H1212.5M832 662.5H1212.5M832 631.5H1212.5M832 600.5H1212.5M832 568.5H1212.5M832 537.5H1212.5M832 506.5H1212.5M832 475.5H1212.5M832 443.5H1212.5M832 412.5H1212.5M832 381.5H1212.5M832 350.5H1212.5M832 318.5H1212.5M832 287.5H1212.5M835 683.5H837M835 673.5H837M835 652.5H837M835 641.5H837M835 621.5H837M835 610.5H837M835 589.5H837M835 579.5H837M835 558.5H837M835 548.5H837M835 527.5H837M835 516.5H837M835 496.5H837M835 485.5H837M835 464.5H837M835 454.5H837M835 433.5H837M835 423.5H837M835 402.5H837M835 391.5H837M835 370.5H837M835 360.5H837M835 339.5H837M835 329.5H837M835 308.5H837M835 297.5H837M835 277.5H837" stroke="#d2d2d2" stroke-width="1" fill="none"/>
<text x="826" y="698" text-anchor="end">0</text><text x="826" y="666" text-anchor="end">30</text><text x="826" y="635" text-anchor="end">60</text><text x="826" y="604" text-anchor="end">90</text><text x="826" y="572" text-anchor="end">120</text><text x="826" y="541" text-anchor="end">150</text><text x="826" y="510" text-anchor="end">180</text><text x="826" y="479" text-anchor="end">210</text><text x="826" y="447" text-anchor="end">240</text><text x="826" y="416" text-anchor="end">270</text><text x="826" y="385" text-anchor="end">300</text><text x="826" y="354" text-anchor="end">330</text><text x="826" y="322" text-anchor="end">360</text><text x="826" y="291" text-anchor="end">390</text>
<rect x="852" y="307" width="45" height="131" fill="#38b8d0"/><rect x="852" y="438" width="45" height="256" fill="#0890ba"/><rect x="927" y="319" width="45" height="122" fill="#38b8d0"/><rect x="927" y="441" width="45" height="253" fill="#0890ba"/><rect x="1002" y="351" width="45" height="94" fill="#38b8d0"/><rect x="1002" y="445" width="45" height="249" fill="#0890ba"/><rect x="1077" y="330" width="45" height="125" fill="#38b8d0"/><rect x="1077" y="455" width="45" height="239" fill="#0890ba"/><rect x="1152" y="352" width="45" height="106" fill="#38b8d0"/><rect x="1152" y="458" width="45" height="236" fill="#0890ba"/>
<path d="M837 694.5H1213M875.5 694V700M845.5 694V697M860.5 694V697M890.5 694V697M905.5 694V697M950.5 694V700M920.5 694V697M935.5 694V697M965.5 694V697M980.5 694V697M1025.5 694V700M995.5 694V697M1010.5 694V697M1040.5 694V697M1055.5 694V697M1100.5 694V700M1070.5 694V697M1085.5 694V697M1115.5 694V697M1130.5 694V697M1175.5 694V700M1145.5 694V697M1160.5 694V697M1190.5 694V697M1205.5 694V697" stroke="#cfcfcf" stroke-width="1" fill="none"/>
<text x="875.5" y="729" text-anchor="middle" letter-spacing="0.1">Matthias Berndt</text><text x="949.7" y="714" text-anchor="middle" letter-spacing="0.1">Grant Culbertson</text><text x="1025.5" y="729" text-anchor="middle" letter-spacing="0.1">Dragan Tomic</text><text x="1100" y="714" text-anchor="middle" letter-spacing="0.1">Mike Seamans</text><text x="1176" y="729" text-anchor="middle" letter-spacing="0.1">Linda Meisner</text>
<text x="1024.6" y="752" text-anchor="middle" font-size="16" letter-spacing="-0.15">Top 5 Employees</text>
<rect x="942.5" y="233.5" width="17" height="13" fill="#0890ba" stroke="#0a7fa6"/><text x="965.3" y="243.5">VacationDays (Sum)</text><rect x="1072.5" y="233.5" width="17" height="13" fill="#38b8d0" stroke="#2fa8c0"/><text x="1095.3" y="243.5" letter-spacing="-0.15">SickLeaveDays (Sum)</text>
</svg>
<!--/DASH-->
</body></html>
